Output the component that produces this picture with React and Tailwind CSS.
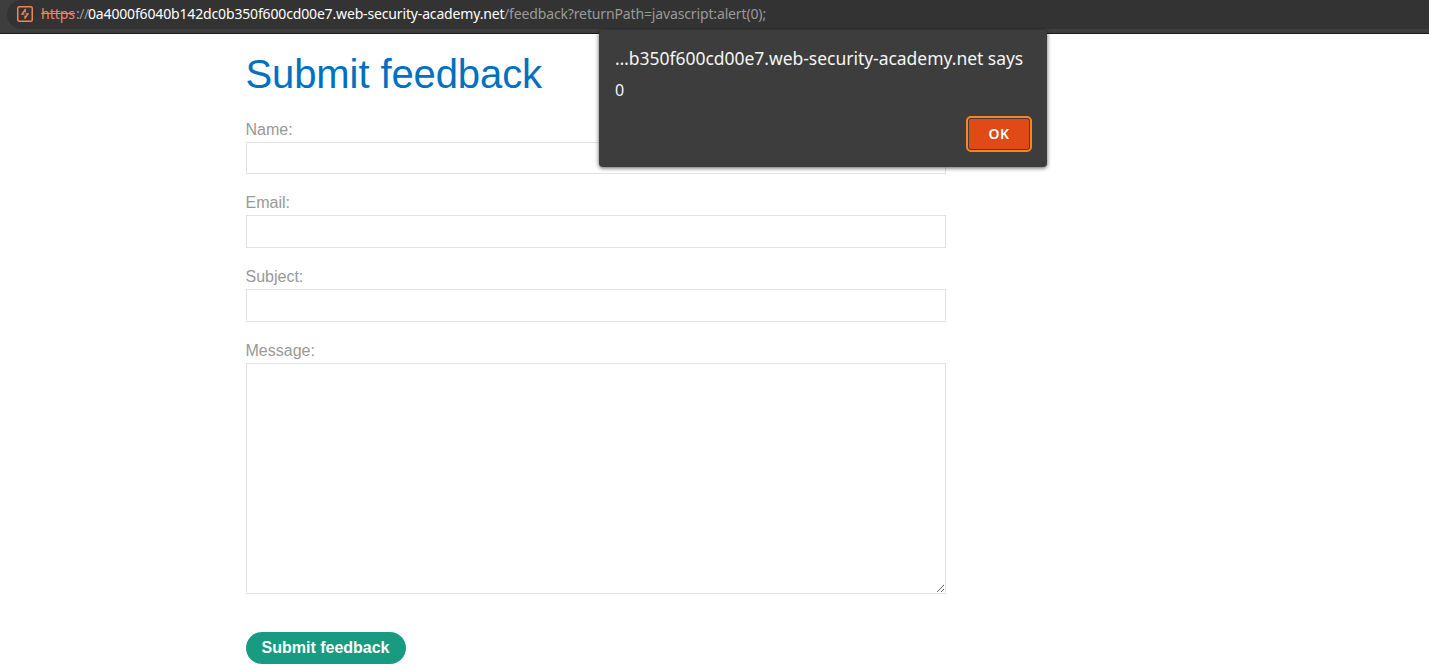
function AddressBar() {
  return (
    <header className="h-[34px] border-b border-[#1d191d] bg-[#3e3e3e]">
      <div className="ml-[7px] flex h-[29px] items-center rounded-l-full bg-[#333333] pl-[9px] font-['Noto_Sans',sans-serif] text-[14px] leading-[28px] whitespace-pre">
        <svg className="mr-[7px] mb-px size-[18px] shrink-0" viewBox="0 0 18 18" fill="none">
          <rect x="1.75" y="1.75" width="14.5" height="14.5" rx="1.5" stroke="#f0845a" strokeWidth="1.5" />
          <path d="M9.6 4L6 9H8.3M9.2 4V7.4M9.7 8.9H12L8.6 13.8M9 10.4V13.8" stroke="#f0845a" strokeWidth="1.3" />
        </svg>
        <div className="flex pb-[2px]">
          <span className="w-[35px] tracking-[0px] text-[#f0845a] line-through">https</span>
          <span className="w-[12px] tracking-[-0.5px] text-[#9a9a9a]">://</span>
          <span className="w-[416px] tracking-[-0.155px] text-white">0a4000f6040b142dc0b350f600cd00e7.web-security-academy.net</span>
          <span className="tracking-[-0.14px] text-[#9a9a9a]">/feedback?returnPath=javascript:alert(0);</span>
        </div>
      </div>
    </header>
  );
}

function Field({ label }) {
  return (
    <label className="mb-[17px] block">
      <span className="block h-6 leading-6">{label}</span>
      <input className="block h-[32.6px] w-full border border-[#e2e2e2] bg-white px-2 outline-none" />
    </label>
  );
}

function AlertDialog() {
  return (
    <div role="dialog" className="absolute top-[30px] left-[599px] flex h-[137px] w-[448px] flex-col rounded-[4px] bg-[#3d3d3d] px-4 pt-[15px] pb-[17px] font-['Noto_Sans',sans-serif] whitespace-nowrap text-[#f5f5f5] shadow-[0_1px_4px_rgba(0,0,0,0.65)]">
      <h2 className="text-[17.5px] leading-[26px] tracking-[-0.03px]">…b350f600cd00e7.web-security-academy.net says</h2>
      <p className="mt-[9px] text-[16px] leading-[20px]">0</p>
      <button className="mt-auto mr-[1px] h-[32px] w-[62px] self-end rounded-[3px] border border-[#3d3d3d] bg-[#e14a17] pb-px text-[14px] font-semibold tracking-[0.4px] text-white outline-2 outline-[#ff8420]">
        OK
      </button>
    </div>
  );
}

export default function App() {
  return (
    <div className="relative h-[671px] w-[1429px] overflow-hidden bg-white">
      <AddressBar />
      <main className="ml-[245.5px] w-[700px] pt-[17px] font-['Liberation_Sans',sans-serif] text-base text-[#999999]">
        <h1 className="mb-[20.85px] text-[40px] leading-[46px] tracking-[-0.1px] text-[#0070c0]">Submit feedback</h1>
        <form>
          <Field label="Name:" />
          <Field label="Email:" />
          <Field label="Subject:" />
          <label className="block">
            <span className="block h-6 leading-6">Message:</span>
            <textarea className="block h-[231px] w-full resize border border-[#e2e2e2] bg-white outline-none" />
          </label>
          <button type="button" className="mt-[38.3px] h-8 w-40 rounded-full bg-[#189b80] text-base leading-8 font-bold text-white">
            Submit feedback
          </button>
        </form>
      </main>
      <AlertDialog />
    </div>
  );
}
